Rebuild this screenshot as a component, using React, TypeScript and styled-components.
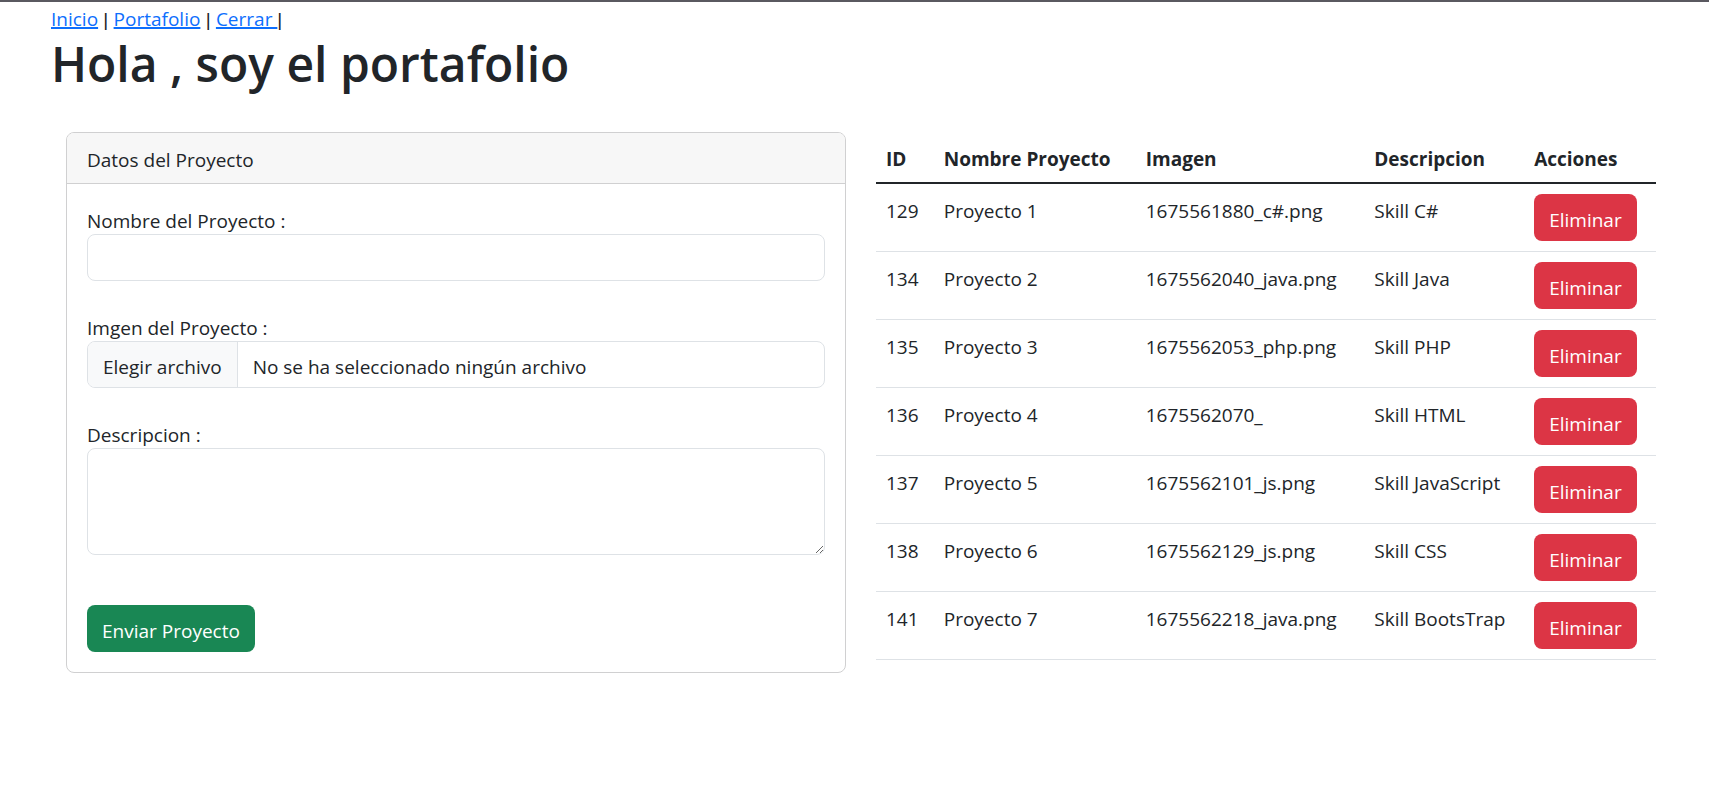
import React from "react";
import styled, { createGlobalStyle, css } from "styled-components";

const GlobalStyle = createGlobalStyle`
  *, *::before, *::after { box-sizing: border-box; }
  body {
    margin: 0;
    background: #fff;
    border-top: 2px solid #5a5960;
    color: #212529;
    font-family: "Segoe UI", "Open Sans", "Noto Sans", sans-serif;
    font-size: 19px;
    line-height: 26px;
  }
  button, input, textarea { font: inherit; color: inherit; }
`;

const Page = styled.div`
  padding: 4px 38px 30px 51px;
`;

const Nav = styled.nav`
  font-family: "Liberation Sans", Arial, sans-serif;
`;

const NavLink = styled.a`
  color: #0d6efd;
  font-family: "Segoe UI", "Open Sans", "Noto Sans", sans-serif;
  text-decoration: underline;
  text-decoration-thickness: 2px;
  white-space: pre;
`;

const Title = styled.h1`
  margin: 0;
  padding: 1px 0 38px;
  font-size: 48px;
  font-weight: 600;
  line-height: 60px;
`;

const Columns = styled.main`
  display: grid;
  grid-template-columns: repeat(2, minmax(0, 1fr));
  gap: 30px;
  padding: 0 15px;
  align-items: start;

  @media (max-width: 1200px) {
    grid-template-columns: minmax(0, 1fr);
  }
`;

const Card = styled.section`
  border: 1px solid #d0d0d1;
  border-radius: 8px;
  overflow: hidden;
`;

const CardHeader = styled.div`
  padding: 14px 20px 10px;
  background: #f7f7f7;
  border-bottom: 1px solid #d0d0d1;
`;

const Form = styled.form`
  display: flex;
  flex-direction: column;
  align-items: flex-start;
  gap: 30px;
  padding: 20px;
`;

const Field = styled.div`
  width: 100%;

  input, textarea { display: block; }
`;

const Label = styled.label`
  display: block;
  padding-top: 4px;
`;

const control = css`
  width: 100%;
  border: 1px solid #dee2e6;
  border-radius: 8px;
  background: #fff;
`;

const TextInput = styled.input`
  ${control}
  height: 47px;
  padding: 8px 15px;
`;

const TextArea = styled.textarea`
  ${control}
  height: 107px;
  padding: 8px 15px;
  margin-bottom: 20px;
  resize: vertical;
`;

const FileBox = styled.div`
  ${control}
  position: relative;
  display: flex;
  height: 47px;
  overflow: hidden;
`;

const FileInput = styled.input`
  position: absolute;
  inset: 0;
  width: 100%;
  opacity: 0;
  cursor: pointer;
`;

const FileButton = styled.span`
  padding: 12px 15px 7px;
  background: #f8f9fa;
  border-right: 1px solid #dee2e6;
`;

const FileName = styled.span`
  padding: 12px 15px 7px;
`;

const Button = styled.button<{ $tone: string }>`
  height: 47px;
  padding: 13px 15px 8px;
  border: 0;
  border-radius: 8px;
  background: ${(p) => p.$tone};
  color: #fff;
  white-space: nowrap;
  cursor: pointer;
`;

const Table = styled.table`
  width: 100%;
  border-collapse: separate;
  border-spacing: 0;
  table-layout: fixed;
`;

const HeadCell = styled.th<{ $width: string }>`
  width: ${(p) => p.$width};
  padding: 14px 10px 10px;
  border-bottom: 2px solid #212529;
  font-weight: 700;
  text-align: left;
  white-space: nowrap;
`;

const Cell = styled.td`
  padding: 14px 10px 10px;
  border-bottom: 1px solid #dee2e6;
  vertical-align: top;
  white-space: nowrap;
`;

const ActionCell = styled(Cell)`
  padding: 10px;

  ${Button} { display: block; }
`;

const headings = [
  ["ID", "7.4%"],
  ["Nombre Proyecto", "25.9%"],
  ["Imagen", "29.3%"],
  ["Descripcion", "20.5%"],
  ["Acciones", "16.9%"],
];

const projects = [
  { id: 129, name: "Proyecto 1", image: "1675561880_c#.png", description: "Skill C#" },
  { id: 134, name: "Proyecto 2", image: "1675562040_java.png", description: "Skill Java" },
  { id: 135, name: "Proyecto 3", image: "1675562053_php.png", description: "Skill PHP" },
  { id: 136, name: "Proyecto 4", image: "1675562070_", description: "Skill HTML" },
  { id: 137, name: "Proyecto 5", image: "1675562101_js.png", description: "Skill JavaScript" },
  { id: 138, name: "Proyecto 6", image: "1675562129_js.png", description: "Skill CSS" },
  { id: 141, name: "Proyecto 7", image: "1675562218_java.png", description: "Skill BootsTrap" },
];

export default function App() {
  return (
    <>
      <GlobalStyle />
      <Page>
        <Nav>
          <NavLink href="#inicio">Inicio</NavLink> |{" "}
          <NavLink href="#portafolio">Portafolio</NavLink> |{" "}
          <NavLink href="#cerrar">{"Cerrar "}</NavLink>|
        </Nav>
        <Title>Hola , soy el portafolio</Title>
        <Columns>
          <Card>
            <CardHeader>Datos del Proyecto</CardHeader>
            <Form onSubmit={(e) => e.preventDefault()}>
              <Field>
                <Label htmlFor="nombre">Nombre del Proyecto :</Label>
                <TextInput id="nombre" type="text" />
              </Field>
              <Field>
                <Label htmlFor="archivo">Imgen del Proyecto :</Label>
                <FileBox>
                  <FileButton>Elegir archivo</FileButton>
                  <FileName>No se ha seleccionado ningún archivo</FileName>
                  <FileInput id="archivo" type="file" />
                </FileBox>
              </Field>
              <Field>
                <Label htmlFor="descripcion">Descripcion :</Label>
                <TextArea id="descripcion" />
              </Field>
              <Button type="submit" $tone="#198754">
                Enviar Proyecto
              </Button>
            </Form>
          </Card>
          <Table>
            <thead>
              <tr>
                {headings.map(([title, width]) => (
                  <HeadCell key={title} scope="col" $width={width}>
                    {title}
                  </HeadCell>
                ))}
              </tr>
            </thead>
            <tbody>
              {projects.map((p) => (
                <tr key={p.id}>
                  <Cell>{p.id}</Cell>
                  <Cell>{p.name}</Cell>
                  <Cell>{p.image}</Cell>
                  <Cell>{p.description}</Cell>
                  <ActionCell>
                    <Button type="button" $tone="#dc3545">
                      Eliminar
                    </Button>
                  </ActionCell>
                </tr>
              ))}
            </tbody>
          </Table>
        </Columns>
      </Page>
    </>
  );
}
